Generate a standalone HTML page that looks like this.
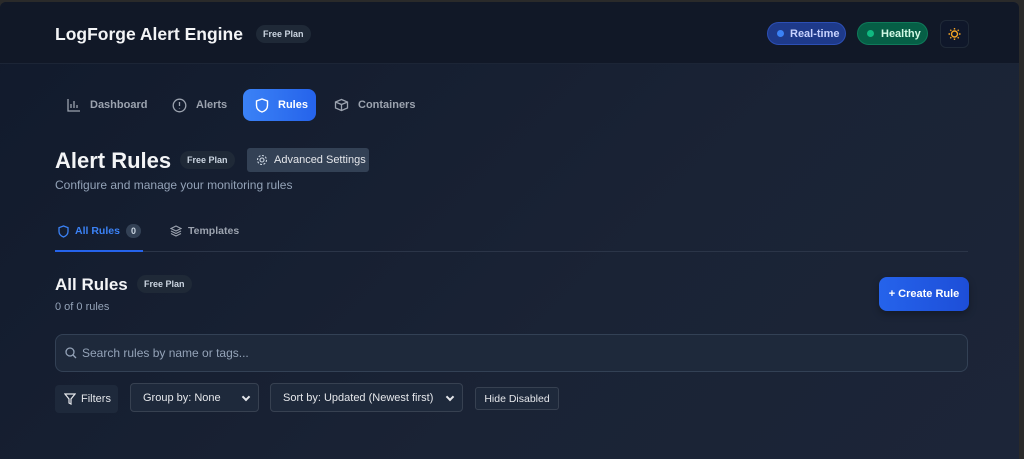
<!DOCTYPE html>
<html><head><style>
*{box-sizing:border-box;margin:0;padding:0}
body{width:1024px;height:459px;overflow:hidden;background:#2a2a2a;font-family:"Liberation Sans",sans-serif;color:#e5e7eb;position:relative}
.win{position:absolute;left:0;top:2px;width:1019px;height:457px;background:linear-gradient(135deg,#111a2c,#1a2335 60%,#1c2538);border-radius:6px 6px 0 0;overflow:hidden}
.hdr{height:62px;background:#111827;border-bottom:1px solid #1c2536;position:relative}
.abs{position:absolute}
.pill{position:absolute;font-size:9px;font-weight:bold;color:#cbd5e1;background:#1f2937;border-radius:9px;height:18px;line-height:18px;padding:0 7px}
.nav{position:absolute;top:87px;height:32px;display:flex;align-items:center;font-size:11px;font-weight:bold;color:#9ca3af}
.nav svg{margin-right:9px}
.sel{position:absolute;height:29px;border:1px solid #374151;border-radius:4px;background:#1e293b;font-size:11px;color:#e5e7eb;display:flex;align-items:center;padding-left:12px}
.sel:after{content:"";position:absolute;right:9px;top:10px;width:4px;height:4px;border-right:2px solid #e5e7eb;border-bottom:2px solid #e5e7eb;transform:rotate(45deg)}
.fc{display:flex;align-items:center}
</style></head><body>
<div class="win">
<div class="hdr">
 <div class="abs" style="left:55px;top:22px;font-size:17.5px;font-weight:bold;color:#f3f4f6">LogForge Alert Engine</div>
 <div class="pill" style="left:256px;top:23px">Free Plan</div>
 <div class="abs fc" style="left:767px;top:20px;width:79px;height:23px;border-radius:12px;background:#1e3a8a;border:1px solid #2c4fb5;font-size:11px;font-weight:bold;color:#c7d2fe;padding-left:22px"><span style="position:absolute;left:9px;top:7px;width:7px;height:7px;border-radius:50%;background:#3b82f6"></span>Real-time</div>
 <div class="abs fc" style="left:857px;top:20px;width:71px;height:23px;border-radius:12px;background:#065f46;border:1px solid #0f7a5a;font-size:11px;font-weight:bold;color:#d1fae5;padding-left:23px"><span style="position:absolute;left:9px;top:7px;width:7px;height:7px;border-radius:50%;background:#10b981"></span>Healthy</div>
 <div class="abs" style="left:940px;top:18px;width:29px;height:28px;border-radius:6px;background:#0f172a;border:1px solid #1f2937">
  <svg width="27" height="26" viewBox="0 0 27 26"><g stroke="#f5a524" stroke-width="1.4" fill="none"><circle cx="13.5" cy="13" r="3"/><path d="M13.5 7v1.5M13.5 17.5V19M7.5 13H9M18 13h1.5M9.3 8.8l1 1M16.7 16.2l1 1M9.3 17.2l1-1M16.7 9.8l1-1"/></g></svg>
 </div>
</div>
<div class="nav" style="left:67px"><svg width="14" height="14" viewBox="0 0 14 14" fill="none" stroke="#9ca3af" stroke-width="1.3"><path d="M1 1v12h12M4 10V6M7 10V3M10 10V7"/></svg>Dashboard</div>
<div class="nav" style="left:172px"><svg width="15" height="15" viewBox="0 0 15 15" fill="none" stroke="#9ca3af" stroke-width="1.3"><circle cx="7.5" cy="7.5" r="6.3"/><path d="M7.5 4v4M7.5 10.3v.4"/></svg>Alerts</div>
<div class="abs" style="left:243px;top:87px;width:73px;height:32px;border-radius:8px;background:linear-gradient(90deg,#3b82f6,#2563eb)"></div>
<div class="nav" style="left:255px;color:#fff"><svg width="14" height="15" viewBox="0 0 14 15" fill="none" stroke="#fff" stroke-width="1.4"><path d="M7 1L1.5 3v4.5C1.5 11 4 13 7 14c3-1 5.5-3 5.5-6.5V3z"/></svg>Rules</div>
<div class="nav" style="left:334px"><svg width="15" height="14" viewBox="0 0 15 14" fill="none" stroke="#9ca3af" stroke-width="1.3"><path d="M1.5 4l6-2.5 6 2.5v6l-6 2.5-6-2.5zM1.5 4l6 2.5 6-2.5M7.5 6.5v6"/></svg>Containers</div>
<div class="abs" style="left:55px;top:146px;font-size:22px;font-weight:bold;color:#f3f4f6">Alert Rules</div>
<div class="pill" style="left:180px;top:149px">Free Plan</div>
<div class="abs fc" style="left:247px;top:146px;width:122px;height:24px;background:#334155;border-radius:3px;font-size:11px;color:#e5e7eb;padding-left:27px"><svg style="position:absolute;left:9px;top:6px" width="12" height="12" viewBox="0 0 12 12" fill="none" stroke="#cbd5e1" stroke-width="1.1"><circle cx="6" cy="6" r="2"/><circle cx="6" cy="6" r="4.5" stroke-dasharray="2 1.5"/></svg>Advanced Settings</div>
<div class="abs" style="left:55px;top:176px;font-size:12px;color:#94a3b8">Configure and manage your monitoring rules</div>
<div class="abs" style="left:55px;top:249px;width:913px;height:1px;background:#2b3548"></div>
<div class="abs" style="left:55px;top:248px;width:88px;height:2px;background:#2563eb"></div>
<div class="abs fc" style="left:58px;top:221px;height:16px;font-size:10.5px;font-weight:bold;color:#3b82f6"><svg width="11" height="13" viewBox="0 0 11 13" fill="none" stroke="#3b82f6" stroke-width="1.3" style="margin-right:6px"><path d="M5.5 1L1 2.7v3.8C1 9.5 3 11 5.5 12 8 11 10 9.5 10 6.5V2.7z"/></svg>All Rules<span style="margin-left:6px;background:#334155;color:#cbd5e1;border-radius:8px;padding:2px 5px;font-size:9px">0</span></div>
<div class="abs fc" style="left:170px;top:221px;height:16px;font-size:10.5px;font-weight:bold;color:#9ca3af"><svg width="12" height="12" viewBox="0 0 12 12" fill="none" stroke="#9ca3af" stroke-width="1.1" style="margin-right:6px"><path d="M6 1L1 3.5 6 6l5-2.5zM1 6l5 2.5L11 6M1 8.5L6 11l5-2.5"/></svg>Templates</div>
<div class="abs" style="left:55px;top:273px;font-size:17px;font-weight:bold;color:#f3f4f6">All Rules</div>
<div class="pill" style="left:137px;top:273px">Free Plan</div>
<div class="abs" style="left:55px;top:299px;font-size:11px;color:#94a3b8">0 of 0 rules</div>
<div class="abs fc" style="left:879px;top:275px;width:90px;height:34px;border-radius:8px;background:linear-gradient(90deg,#2563eb,#1d4ed8);font-size:11px;font-weight:bold;color:#fff;justify-content:center;box-shadow:0 3px 8px rgba(0,0,0,.3)">+ Create Rule</div>
<div class="abs fc" style="left:55px;top:332px;width:913px;height:38px;border-radius:8px;background:#1e293b;border:1px solid #334155;font-size:12px;color:#94a3b8;padding-left:26px"><svg style="position:absolute;left:9px;top:12px" width="12" height="12" viewBox="0 0 12 12" fill="none" stroke="#94a3b8" stroke-width="1.3"><circle cx="5" cy="5" r="4"/><path d="M8 8l3 3"/></svg>Search rules by name or tags...</div>
<div class="abs fc" style="left:55px;top:383px;width:63px;height:28px;border-radius:4px;background:#1e293b;font-size:11px;color:#e5e7eb;padding-left:26px"><svg style="position:absolute;left:9px;top:8px" width="12" height="12" viewBox="0 0 12 12" fill="none" stroke="#e5e7eb" stroke-width="1.2"><path d="M1 1h10L7 6v5L5 10V6z"/></svg>Filters</div>
<div class="sel" style="left:130px;top:381px;width:129px">Group by: None</div>
<div class="sel" style="left:270px;top:381px;width:193px">Sort by: Updated (Newest first)</div>
<div class="abs fc" style="left:475px;top:385px;width:84px;height:23px;border:1px solid #374151;border-radius:3px;background:#1e293b;font-size:10.5px;color:#e5e7eb;justify-content:center">Hide Disabled</div>
</div>
</body></html>
